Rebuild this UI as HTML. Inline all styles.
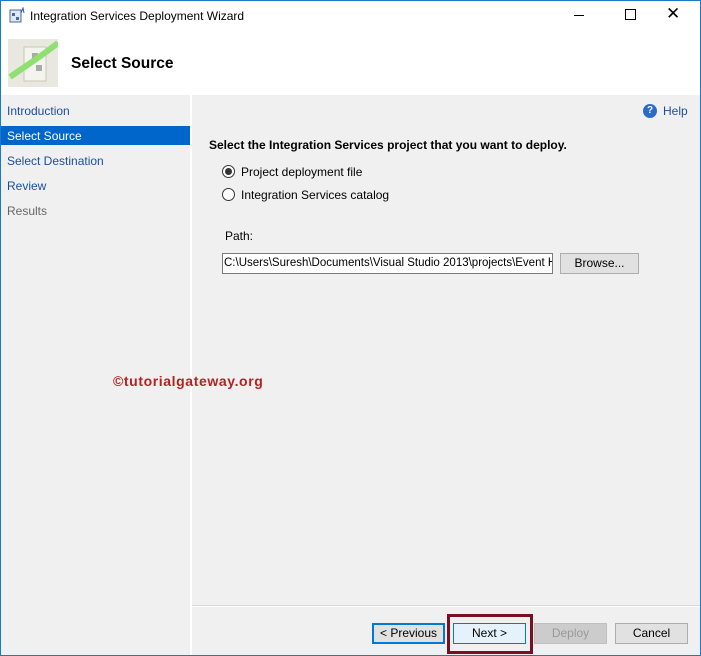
<!DOCTYPE html><html><head><style>
*{margin:0;padding:0;box-sizing:border-box}
body{width:701px;height:656px;overflow:hidden;background:#f0f0f0;font-family:"Liberation Sans",sans-serif;font-size:12px;position:relative}
.a{position:absolute}
.btn{position:absolute;top:623px;height:21px;border:1px solid #adadad;background:#e1e1e1;text-align:center;line-height:19px;font-size:12px}
.nav{position:absolute;left:7px;color:#1a4fa0;font-size:12px}
.radio{position:absolute;width:13px;height:13px;border:1px solid #333;border-radius:50%;background:#fff}
</style></head><body>
<div class="a" style="left:0;top:0;width:701px;height:95px;background:#fff"></div>
<div class="a" style="left:0;top:0;width:701px;height:656px;border:1px solid #1979ca;pointer-events:none;z-index:5"></div>
<svg class="a" style="left:9px;top:7px" width="16" height="16"><rect x="1" y="3" width="11" height="12" fill="#dfe8f4" stroke="#4a6a9a"/><rect x="3" y="6" width="3" height="3" fill="#4a6a9a"/><rect x="7" y="10" width="3" height="3" fill="#4a6a9a"/><path d="M12 6 L14 1 L15 6" stroke="#2a5ab0" fill="none"/></svg>
<div class="a" style="left:30px;top:9px;font-size:12px;color:#000">Integration Services Deployment Wizard</div>
<div class="a" style="left:574px;top:15px;width:10px;height:1px;background:#000"></div>
<div class="a" style="left:625px;top:9px;width:11px;height:11px;border:1px solid #000"></div>
<div class="a" style="left:666px;top:4px;font-size:17px">✕</div>
<svg class="a" style="left:8px;top:39px" width="50" height="48"><rect width="50" height="48" fill="#e8e8e0"/><rect x="16" y="8" width="22" height="34" fill="#f4f4ee" stroke="#c8c8b8"/><rect x="24" y="14" width="6" height="6" fill="#aaa"/><rect x="28" y="26" width="6" height="6" fill="#aaa"/><path d="M2 38 L34 16 L50 4" stroke="#8fe070" stroke-width="6" fill="none"/></svg>
<div class="a" style="left:71px;top:55px;font-size:15.5px;font-weight:bold">Select Source</div>
<div class="a" style="left:190px;top:95px;width:2px;height:561px;background:#fff"></div>
<div class="nav" style="top:104px">Introduction</div>
<div class="a" style="left:1px;top:126px;width:189px;height:19px;background:#0066cc"></div>
<div class="nav" style="top:129px;color:#fff">Select Source</div>
<div class="nav" style="top:154px">Select Destination</div>
<div class="nav" style="top:179px">Review</div>
<div class="nav" style="top:204px;color:#666">Results</div>
<div class="a" style="left:643px;top:104px;width:14px;height:14px;border-radius:50%;background:#2a6ac8;color:#fff;font-size:10px;font-weight:bold;text-align:center;line-height:14px">?</div>
<div class="a" style="left:663px;top:104px;color:#1a4fa0">Help</div>
<div class="a" style="left:209px;top:138px;font-weight:bold">Select the Integration Services project that you want to deploy.</div>
<div class="radio" style="left:222px;top:165px"><div style="margin:2px;width:7px;height:7px;border-radius:50%;background:#333"></div></div>
<div class="a" style="left:241px;top:165px">Project deployment file</div>
<div class="radio" style="left:222px;top:188px"></div>
<div class="a" style="left:241px;top:188px">Integration Services catalog</div>
<div class="a" style="left:225px;top:229px">Path:</div>
<div class="a" style="left:222px;top:253px;width:331px;height:21px;background:#fff;border:1px solid #7a7a7a;padding:3px 1px;overflow:hidden;white-space:nowrap;font-size:11.5px">C:\Users\Suresh\Documents\Visual Studio 2013\projects\Event Handlers</div>
<div class="btn" style="left:560px;top:253px;width:79px">Browse...</div>
<div class="a" style="left:113px;top:373px;color:#b22222;font-weight:bold;font-size:14px;letter-spacing:0.6px">©tutorialgateway.org</div>
<div class="a" style="left:192px;top:605px;width:508px;height:1px;background:#d8d8d8"></div>
<div class="a" style="left:192px;top:606px;width:508px;height:1px;background:#fff"></div>
<div class="btn" style="left:372px;width:73px;border:2px solid #0078d7;line-height:17px">&lt; Previous</div>
<div class="btn" style="left:453px;width:73px;border-color:#0078d7;background:#e5f1fb">Next &gt;</div>
<div class="a" style="left:447px;top:614px;width:86px;height:40px;border:3px solid #7a1020"></div>
<div class="btn" style="left:534px;width:73px;border-color:#bfbfbf;background:#ccc;color:#999">Deploy</div>
<div class="btn" style="left:615px;width:73px">Cancel</div>
</body></html>
